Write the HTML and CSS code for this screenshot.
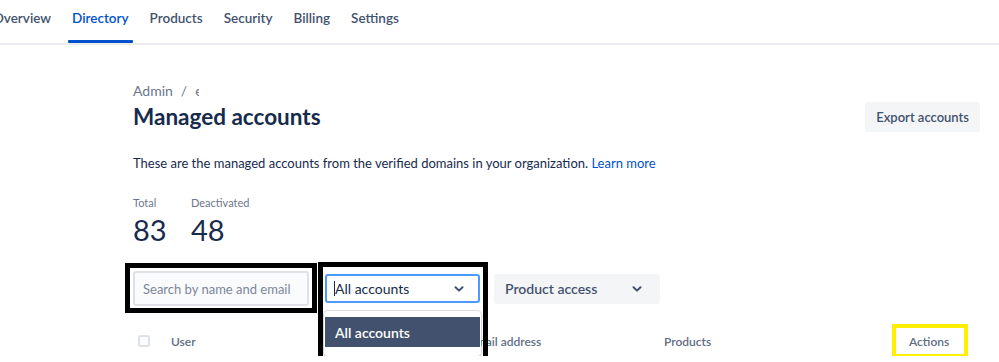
FILE: index.html
```html
<!DOCTYPE html>
<html lang="en">
<head>
  <meta charset="UTF-8">
  <meta name="viewport" content="width=device-width, initial-scale=1.0">
  <title>Managed accounts</title>
  <link rel="stylesheet" href="styles.css">
</head>
<body>
  <header class="top-nav">
    <nav class="tabs">
      <a class="tab" href="#">Overview</a>
      <a class="tab active" href="#">Directory</a>
      <a class="tab" href="#">Products</a>
      <a class="tab" href="#">Security</a>
      <a class="tab" href="#">Billing</a>
      <a class="tab" href="#">Settings</a>
    </nav>
  </header>

  <main class="page">
    <div class="breadcrumbs">
      <span>Admin</span>
      <span class="crumb-sep">/</span>
      <span class="crumb-cut">e</span>
    </div>

    <div class="page-head">
      <h1>Managed accounts</h1>
      <button class="btn">Export accounts</button>
    </div>

    <p class="intro">These are the managed accounts from the verified domains in your organization. <a href="#">Learn more</a></p>

    <div class="stats">
      <div class="stat">
        <div class="stat-label">Total</div>
        <div class="stat-value">83</div>
      </div>
      <div class="stat">
        <div class="stat-label">Deactivated</div>
        <div class="stat-value">48</div>
      </div>
    </div>

    <div class="filters">
      <div class="search">
        <input type="text" class="search-input" placeholder="Search by name and email">
        <span class="mark mark-search"></span>
      </div>

      <div class="picker">
        <div class="picker-control">
          <span class="caret"></span>
          <span class="picker-value">All accounts</span>
          <svg class="chevron" width="10" height="6" viewBox="0 0 10 6"><path d="M1.5 1.2 5 4.6 8.5 1.2" fill="none" stroke="#42526e" stroke-width="2" stroke-linecap="round" stroke-linejoin="round"/></svg>
        </div>
        <div class="picker-menu">
          <div class="picker-option">All accounts</div>
        </div>
        <span class="mark mark-picker"></span>
      </div>

      <button class="btn filter-btn">
        <span>Product access</span>
        <svg class="chevron" width="10" height="6" viewBox="0 0 10 6"><path d="M1.5 1.2 5 4.6 8.5 1.2" fill="none" stroke="#42526e" stroke-width="2" stroke-linecap="round" stroke-linejoin="round"/></svg>
      </button>
    </div>

    <div class="table-head">
      <div class="th"><span class="checkbox"></span></div>
      <div class="th">User</div>
      <div class="th">Email address</div>
      <div class="th">Products</div>
      <div class="th th-actions">Actions<span class="mark mark-actions"></span></div>
    </div>
  </main>
</body>
</html>
```

FILE: styles.css
```css
body {
  margin: 0;
  font-family: Lato, "Noto Sans", sans-serif;
  color: #172b4d;
  background: #fff;
}
.top-nav {
  height: 43px;
  border-bottom: 2px solid #ebecf0;
  overflow: hidden;
}
.tabs {
  display: flex;
  height: 100%;
  margin-left: -11px;
  gap: 13px;
}
.tab {
  position: relative;
  display: flex;
  align-items: center;
  padding: 0 4px 7px;
  font-size: 13.5px;
  font-weight: 600;
  color: #42526e;
  text-decoration: none;
}
.tab.active {
  color: #0052cc;
}
.tab.active::after {
  content: "";
  position: absolute;
  left: 0;
  right: 0;
  bottom: 0;
  height: 3px;
  background: #0052cc;
  border-radius: 1px;
}
.page {
  width: 847px;
  margin-left: 133px;
  padding-top: 36px;
}
.breadcrumbs {
  display: flex;
  gap: 8px;
  font-size: 14px;
  line-height: 20px;
  color: #6b778c;
}
.crumb-cut {
  display: inline-block;
  width: 4px;
  overflow: hidden;
}
.page-head {
  display: flex;
  align-items: center;
  justify-content: space-between;
  height: 32px;
}
h1 {
  margin: 0;
  font-size: 22.5px;
  line-height: 28px;
  font-weight: 700;
  color: #172b4d;
}
.btn {
  display: flex;
  align-items: center;
  height: 30px;
  padding: 0 11px;
  border: none;
  border-radius: 3px;
  background: #f4f5f7;
  color: #42526e;
  font-family: inherit;
  font-size: 14px;
  font-weight: 600;
}
.page-head .btn {
  font-size: 13px;
}
.intro {
  margin: 20px 0 0;
  font-size: 13px;
  line-height: 20px;
}
.intro a {
  color: #0052cc;
  text-decoration: none;
}
.stats {
  display: grid;
  grid-template-columns: 58px auto;
  margin-top: 22px;
}
.stat-label {
  font-size: 11px;
  line-height: 16px;
  color: #6b778c;
}
.stat-value {
  margin-top: 3px;
  font-size: 29px;
  line-height: 32px;
  font-weight: 400;
}
.filters {
  display: flex;
  align-items: center;
  margin-top: 25px;
}
.search {
  position: relative;
}
.search-input {
  display: block;
  box-sizing: border-box;
  width: 176px;
  height: 35px;
  margin: 0;
  padding: 0 8px;
  border: 2px solid #dfe1e6;
  border-radius: 3px;
  background: #fafbfc;
  font-family: inherit;
  font-size: 13px;
  color: #172b4d;
}
.search-input::placeholder {
  color: #7a869a;
}
.picker {
  position: relative;
  z-index: 1;
  margin-left: 16px;
}
.picker-control {
  display: flex;
  align-items: center;
  box-sizing: border-box;
  width: 155px;
  height: 29px;
  padding: 0 14px 0 7px;
  border: 2px solid #4c9aff;
  border-radius: 3px;
  background: #fff;
  font-size: 14px;
}
.caret {
  width: 0;
  height: 15px;
  border-left: 1px solid #172b4d;
}
.picker-value {
  flex: 1;
}
.picker-menu {
  position: absolute;
  top: 37px;
  left: -1px;
  width: 157px;
  padding: 6px 0 9px;
  box-sizing: border-box;
  border-radius: 4px;
  background: #fff;
  box-shadow: 0 0 0 1px rgba(9, 30, 66, 0.13), 0 2px 4px rgba(9, 30, 66, 0.12);
}
.picker-option {
  height: 30px;
  margin: 0 1px;
  padding: 0 10px;
  display: flex;
  align-items: center;
  background: #42526e;
  color: #fff;
  font-size: 14px;
  font-weight: 600;
}
.filter-btn {
  justify-content: space-between;
  width: 166px;
  padding: 0 18px 0 11px;
  margin-left: 14px;
}
.table-head {
  display: grid;
  grid-template-columns: 38px 298px 195px 245px 1fr;
  align-items: center;
  height: 30px;
  margin-top: 20px;
}
.th {
  position: relative;
  font-size: 12px;
  font-weight: 600;
  color: #5e6c84;
}
.checkbox {
  display: block;
  box-sizing: border-box;
  width: 12px;
  height: 12px;
  margin-left: 5px;
  border: 2px solid #dfe1e6;
  border-radius: 3px;
  background: #fafbfc;
}
.mark {
  position: absolute;
  box-sizing: border-box;
  pointer-events: none;
}
.mark-search {
  top: -8px;
  left: -8px;
  right: -8px;
  bottom: -7px;
  border: 5px solid #000;
}
.mark-picker {
  top: -12px;
  left: -7px;
  right: -8px;
  height: 101px;
  border: 5px solid #000;
}
.mark-actions {
  top: -10px;
  left: -17px;
  width: 76px;
  height: 34px;
  border: 4px solid #ffef00;
}
```
